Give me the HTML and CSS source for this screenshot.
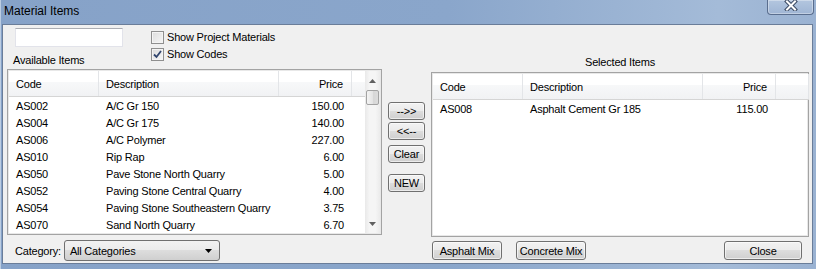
FILE: index.html
```html
<!DOCTYPE html>
<html lang="en">
<head>
<meta charset="UTF-8" />
<meta name="viewport" content="width=device-width, initial-scale=1.0" />
<title>Material Items</title>
<link rel="stylesheet" href="styles.css">
</head>
<body>
<div class="window">
<div class="titlebar">
<span class="title">Material Items</span>
<div class="close-btn">
<svg width="14" height="11" viewBox="0 0 14 11">
<path d="M3 1.5 L11 9.5 M11 1.5 L3 9.5" stroke="#3b4a63" stroke-width="4" stroke-linecap="square" fill="none"/>
<path d="M3 1.5 L11 9.5 M11 1.5 L3 9.5" stroke="#ffffff" stroke-width="2" stroke-linecap="square" fill="none"/>
</svg>
</div>
</div>
<div class="client">
<div class="left">
<div class="top">
<div class="search-col">
<input class="search" type="text">
<div class="caption">Available Items</div>
</div>
<div class="checks">
<div class="check"><span class="box"></span>Show Project Materials</div>
<div class="check"><span class="box"><svg width="9" height="9" viewBox="0 0 9 9"><path d="M1 4.5 L3.5 7 L8 1" stroke="#31456e" stroke-width="1.8" fill="none"/></svg></span>Show Codes</div>
</div>
</div>
<div class="list left-list">
<div class="grid">
<div class="row head">
<div class="cell">Code</div><div class="cell">Description</div><div class="cell num">Price</div><div class="cell"></div>
</div>
<div class="row"><div class="cell">AS002</div><div class="cell">A/C Gr 150</div><div class="cell num">150.00</div><div class="cell"></div></div>
<div class="row"><div class="cell">AS004</div><div class="cell">A/C Gr 175</div><div class="cell num">140.00</div><div class="cell"></div></div>
<div class="row"><div class="cell">AS006</div><div class="cell">A/C Polymer</div><div class="cell num">227.00</div><div class="cell"></div></div>
<div class="row"><div class="cell">AS010</div><div class="cell">Rip Rap</div><div class="cell num">6.00</div><div class="cell"></div></div>
<div class="row"><div class="cell">AS050</div><div class="cell">Pave Stone North Quarry</div><div class="cell num">5.00</div><div class="cell"></div></div>
<div class="row"><div class="cell">AS052</div><div class="cell">Paving Stone Central Quarry</div><div class="cell num">4.00</div><div class="cell"></div></div>
<div class="row"><div class="cell">AS054</div><div class="cell">Paving Stone Southeastern Quarry</div><div class="cell num">3.75</div><div class="cell"></div></div>
<div class="row"><div class="cell">AS070</div><div class="cell">Sand North Quarry</div><div class="cell num">6.70</div><div class="cell"></div></div>
</div>
<div class="scrollbar">
<div class="arrow-btn"><svg width="7" height="4" viewBox="0 0 7 4"><path d="M0 4 L3.5 0 L7 4 Z" fill="#606060"/></svg></div>
<div class="thumb"></div>
<div class="track"></div>
<div class="arrow-btn"><svg width="7" height="4" viewBox="0 0 7 4"><path d="M0 0 L3.5 4 L7 0 Z" fill="#606060"/></svg></div>
</div>
</div>
<div class="category">
<span>Category:</span>
<div class="combo">
<span>All Categories</span>
<svg width="7" height="4" viewBox="0 0 7 4"><path d="M0 0 L3.5 4 L7 0 Z" fill="#000"/></svg>
</div>
</div>
</div>
<div class="middle">
<div class="btn move-btn">--&gt;&gt;</div>
<div class="btn move-btn back">&lt;&lt;--</div>
<div class="btn move-btn clear">Clear</div>
<div class="btn move-btn new">NEW</div>
</div>
<div class="right">
<div class="caption center">Selected Items</div>
<div class="list right-list">
<div class="grid">
<div class="row head">
<div class="cell">Code</div><div class="cell">Description</div><div class="cell num">Price</div><div class="cell"></div>
</div>
<div class="row"><div class="cell">AS008</div><div class="cell">Asphalt Cement Gr 185</div><div class="cell num">115.00</div><div class="cell"></div></div>
</div>
</div>
<div class="bottom-buttons">
<div class="btn mix-btn">Asphalt Mix</div>
<div class="btn mix-btn">Concrete Mix</div>
<div class="btn close-dlg">Close</div>
</div>
</div>
</div>
</div>
</body>
</html>
```

FILE: styles.css
```css
* {
margin: 0;
padding: 0;
box-sizing: border-box;
}
body {
width: 816px;
height: 269px;
overflow: hidden;
font-family: "Liberation Sans", Arial, sans-serif;
font-size: 11px;
letter-spacing: -0.2px;
color: #000;
}
.window {
width: 816px;
height: 269px;
display: flex;
flex-direction: column;
padding: 0 3px 5px 2px;
background: linear-gradient(90deg, #86a2c8 0%, #8aa6cb 55%, #a4bbd8 88%, #9ab2d2 100%);
box-shadow: inset 1px 0 0 #bccde2;
}
.titlebar {
height: 24px;
display: flex;
justify-content: space-between;
align-items: flex-start;
}
.title {
padding: 4px 0 0 2px;
font-size: 12px;
line-height: 14px;
letter-spacing: 0;
}
.close-btn {
width: 47px;
height: 15px;
margin-right: -1px;
display: flex;
align-items: flex-start;
justify-content: center;
padding-top: 0;
border: 1px solid #5a6e8e;
border-top: none;
border-radius: 0 0 4px 4px;
background: linear-gradient(#b3c6df, #9fb5d4);
box-shadow: inset 0 0 0 1px rgba(255, 255, 255, 0.35);
}
.client {
flex: 1;
display: flex;
gap: 6px;
padding: 0 2px 0 4px;
background: #f0f0f0;
border: 1px solid #6a7d99;
}
.left {
width: 375px;
display: flex;
flex-direction: column;
}
.top {
height: 44px;
display: flex;
}
.search-col {
width: 144px;
padding-left: 6px;
}
.search {
display: block;
width: 108px;
height: 19px;
margin: 3px 0 0 2px;
border: 1px solid #e2e3ea;
border-top-color: #abadb3;
background: #fff;
}
.caption {
margin-top: 7px;
line-height: 13px;
}
.caption.center {
margin-top: 0;
text-align: center;
}
.checks {
padding-top: 4px;
}
.check {
height: 16px;
margin-bottom: 1px;
display: flex;
align-items: center;
gap: 3px;
}
.box {
width: 13px;
height: 13px;
display: flex;
align-items: center;
justify-content: center;
border: 1px solid #8f8f8f;
background: linear-gradient(135deg, #dcdcdc, #f6f6f6);
box-shadow: inset 0 0 0 1px #f4f4f4;
}
.list {
display: flex;
background: #fff;
border: 1px solid #a3a3a3;
box-shadow: inset 0 0 0 1px #e8e8e8;
}
.left-list {
height: 166px;
}
.grid {
flex: 1;
}
.row {
display: grid;
height: 17px;
align-items: center;
}
.left-list .row {
grid-template-columns: 90px 180px 73px 13px;
}
.right-list .row {
grid-template-columns: 90px 180px 73px 33px;
}
.row.head {
height: 26px;
align-items: stretch;
background: linear-gradient(#ffffff 0%, #ffffff 45%, #f7f8f9 46%, #f1f2f4 100%);
border-bottom: 1px solid #d5d5d5;
}
.left-list .row.head {
margin: 1px 0 0 1px;
}
.right-list .row.head {
margin: 1px 0 0 1px;
}
.row.head .cell {
display: flex;
align-items: center;
border-right: 1px solid #e3e5e8;
}
.row.head .cell.num {
justify-content: flex-end;
}
.cell {
padding: 0 7px 0 7px;
white-space: nowrap;
overflow: hidden;
}
.cell.num {
text-align: right;
padding-right: 8px;
}
.row:not(.head) {
margin-left: 1px;
}
.scrollbar {
width: 17px;
display: flex;
flex-direction: column;
margin: 1px 1px 1px 0;
background: linear-gradient(90deg, #e9e9e9, #f5f5f5 30%, #f5f5f5 70%, #ebebeb);
}
.arrow-btn {
height: 19px;
display: flex;
align-items: center;
justify-content: center;
}
.thumb {
height: 15px;
margin: 0 1px;
border: 1px solid #a2a2a2;
border-radius: 2px;
background: linear-gradient(90deg, #f4f4f4, #e4e4e4 50%, #d6d6d6 51%, #dcdcdc);
}
.track {
flex: 1;
}
.category {
margin-top: 5px;
height: 21px;
display: flex;
align-items: center;
padding-left: 8px;
gap: 3px;
}
.combo {
width: 156px;
height: 21px;
display: flex;
align-items: center;
justify-content: space-between;
padding: 0 7px 0 5px;
border: 1px solid #707070;
border-radius: 3px;
background: linear-gradient(#f2f2f2 0%, #ebebeb 49%, #dddddd 50%, #cfcfcf 100%);
}
.btn {
height: 18px;
display: flex;
align-items: center;
justify-content: center;
border: 1px solid #707070;
border-radius: 3px;
background: linear-gradient(#f2f2f2 0%, #ebebeb 49%, #dddddd 50%, #cfcfcf 100%);
box-shadow: inset 0 0 0 1px rgba(255, 255, 255, 0.6);
}
.middle {
width: 37px;
padding-top: 77px;
display: flex;
flex-direction: column;
}
.move-btn.back {
margin-top: 2px;
}
.move-btn.clear {
margin-top: 5px;
}
.move-btn.new {
margin-top: 11px;
}
.right {
width: 378px;
padding-top: 31px;
display: flex;
flex-direction: column;
}
.right-list {
height: 165px;
margin-top: 3px;
}
.bottom-buttons {
margin-top: 4px;
display: flex;
padding-left: 1px;
}
.mix-btn {
width: 70px;
height: 19px;
margin-right: 14px;
}
.close-dlg {
width: 78px;
height: 19px;
margin-left: auto;
margin-right: 7px;
}
```
